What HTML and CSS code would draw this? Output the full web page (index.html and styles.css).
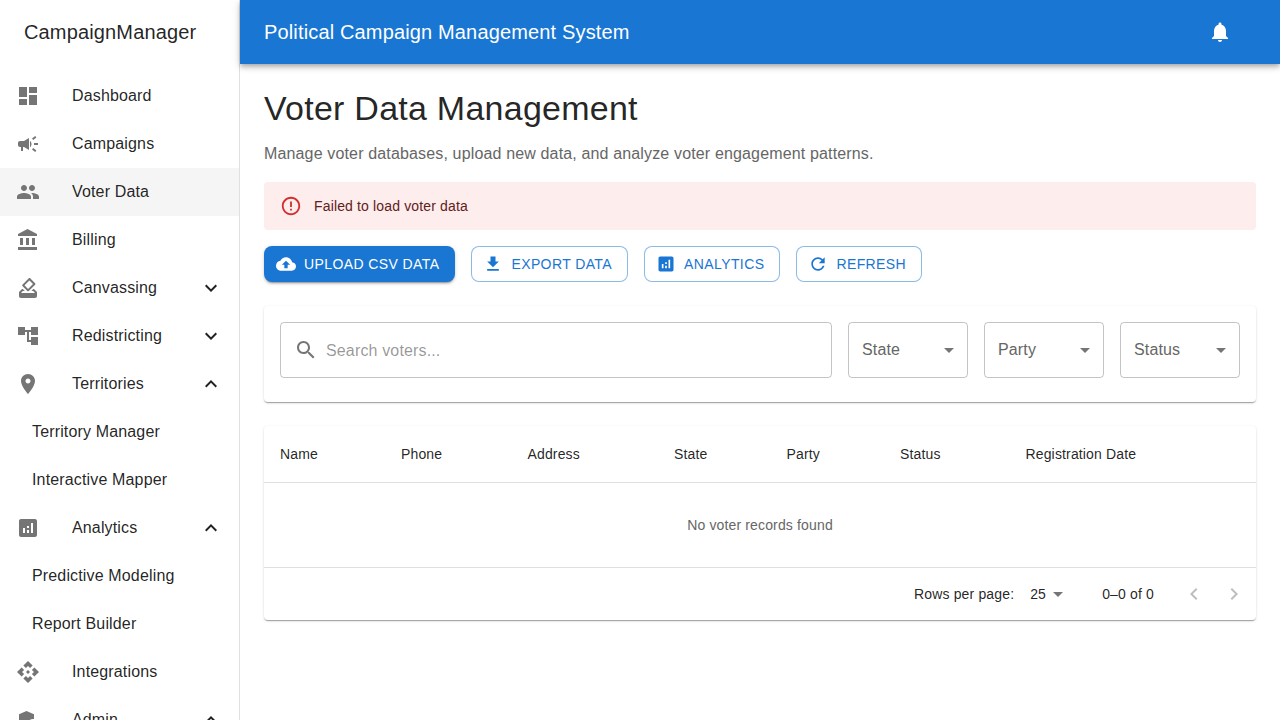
FILE: index.html
```html
<!DOCTYPE html>
<html lang="en">
<head>
<meta charset="utf-8">
<title>Voter Data Management</title>
<link rel="stylesheet" href="styles.css">
</head>
<body>
<svg class="sprite" aria-hidden="true">
  <symbol id="i-dashboard" viewBox="0 0 24 24"><path d="M3 13h8V3H3v10zm0 8h8v-6H3v6zm10 0h8V11h-8v10zm0-18v6h8V3h-8z"/></symbol>
  <symbol id="i-campaign" viewBox="0 0 24 24"><path d="M18 11v2h4v-2h-4zm-2 6.61c.96.71 2.21 1.65 3.2 2.39.4-.53.8-1.07 1.2-1.6-.99-.74-2.24-1.68-3.2-2.4-.4.54-.8 1.08-1.2 1.61zM20.4 5.6c-.4-.53-.8-1.07-1.2-1.6-.99.74-2.24 1.68-3.2 2.4.4.53.8 1.07 1.2 1.6.96-.72 2.21-1.65 3.2-2.4zM4 9c-1.1 0-2 .9-2 2v2c0 1.1.9 2 2 2h1v4h2v-4h1l5 3V6L8 9H4zm11.5 3c0-1.33-.58-2.53-1.5-3.35v6.69c.92-.81 1.5-2.01 1.5-3.34z"/></symbol>
  <symbol id="i-people" viewBox="0 0 24 24"><path d="M16 11c1.66 0 2.99-1.34 2.99-3S17.66 5 16 5c-1.66 0-3 1.34-3 3s1.34 3 3 3zm-8 0c1.66 0 2.99-1.34 2.99-3S9.66 5 8 5C6.34 5 5 6.34 5 8s1.34 3 3 3zm0 2c-2.33 0-7 1.17-7 3.5V19h14v-2.5c0-2.33-4.67-3.5-7-3.5zm8 0c-.29 0-.62.02-.97.05 1.16.84 1.97 1.97 1.97 3.45V19h6v-2.5c0-2.33-4.67-3.5-7-3.5z"/></symbol>
  <symbol id="i-bank" viewBox="0 0 24 24"><path d="M4 10v7h3v-7H4zm6 0v7h3v-7h-3zM2 22h19v-3H2v3zm14-12v7h3v-7h-3zm-4.5-9L2 6v2h19V6l-9.5-5z"/></symbol>
  <symbol id="i-vote" viewBox="0 0 24 24"><path d="M18 13h-.68l-2 2h1.91L19 17H5l1.78-2h2.05l-2-2H6l-3 3v4c0 1.1.89 2 1.99 2H19c1.1 0 2-.89 2-2v-4l-3-3zm-1-5.05l-4.95 4.95-3.54-3.54 4.95-4.95L17 7.95zm-4.24-5.66L6.39 8.66c-.39.39-.39 1.02 0 1.41l4.95 4.95c.39.39 1.02.39 1.41 0l6.36-6.36c.39-.39.39-1.02 0-1.41L14.16 2.3c-.38-.4-1.01-.4-1.4-.01z"/></symbol>
  <symbol id="i-tree" viewBox="0 0 24 24"><path d="M22 11V3h-7v3H9V3H2v8h7V8h2v10h4v3h7v-8h-7v3h-2V8h2v3z"/></symbol>
  <symbol id="i-place" viewBox="0 0 24 24"><path d="M12 2C8.13 2 5 5.13 5 9c0 5.25 7 13 7 13s7-7.75 7-13c0-3.87-3.13-7-7-7zm0 9.5c-1.38 0-2.5-1.12-2.5-2.5s1.12-2.5 2.5-2.5 2.5 1.12 2.5 2.5-1.12 2.5-2.5 2.5z"/></symbol>
  <symbol id="i-analytics" viewBox="0 0 24 24"><path d="M19 3H5c-1.1 0-2 .9-2 2v14c0 1.1.9 2 2 2h14c1.1 0 2-.9 2-2V5c0-1.1-.9-2-2-2zM9 17H7v-5h2v5zm4 0h-2v-3h2v3zm0-5h-2v-2h2v2zm4 5h-2V7h2v10z"/></symbol>
  <symbol id="i-api" viewBox="0 0 24 24"><path d="M14 12l-2 2-2-2 2-2 2 2zm-2-6l2.12 2.12 2.5-2.5L12 1 7.38 5.62l2.5 2.5L12 6zm-6 6l2.12-2.12-2.5-2.5L1 12l4.62 4.62 2.5-2.5L6 12zm12 0l-2.12 2.12 2.5 2.5L23 12l-4.62-4.62-2.5 2.5L18 12zm-6 6l-2.12-2.12-2.5 2.5L12 23l4.62-4.62-2.5-2.5L12 18z"/></symbol>
  <symbol id="i-admin" viewBox="0 0 24 24"><path d="M17 11c.34 0 .67.04 1 .09V6.27L10.5 3 3 6.27v4.91c0 4.54 3.2 8.79 7.5 9.82.55-.13 1.08-.32 1.6-.55-.69-.98-1.1-2.17-1.1-3.45 0-3.31 2.69-6 6-6z"/><path d="M17 13c-2.21 0-4 1.79-4 4s1.79 4 4 4 4-1.79 4-4-1.79-4-4-4zm0 1.38c.62 0 1.12.51 1.12 1.12s-.51 1.12-1.12 1.12-1.12-.51-1.12-1.12.5-1.12 1.12-1.12zm0 5.37c-.93 0-1.74-.46-2.24-1.17.05-.72 1.51-1.08 2.24-1.08s2.19.36 2.24 1.08c-.5.71-1.31 1.17-2.24 1.17z"/></symbol>
  <symbol id="i-more" viewBox="0 0 24 24"><path d="M16.59 8.59L12 13.17 7.41 8.59 6 10l6 6 6-6z"/></symbol>
  <symbol id="i-less" viewBox="0 0 24 24"><path d="M12 8l-6 6 1.41 1.41L12 10.83l4.59 4.58L18 14z"/></symbol>
  <symbol id="i-bell" viewBox="0 0 24 24"><path d="M12 22c1.1 0 2-.9 2-2h-4c0 1.1.89 2 2 2zm6-6v-5c0-3.07-1.64-5.64-4.5-6.32V4c0-.83-.67-1.5-1.5-1.5s-1.5.67-1.5 1.5v.68C7.63 5.36 6 7.92 6 11v5l-2 2v1h16v-1l-2-2z"/></symbol>
  <symbol id="i-error" viewBox="0 0 24 24"><path d="M11 15h2v2h-2zm0-8h2v6h-2zm.99-5C6.47 2 2 6.48 2 12s4.47 10 9.99 10C17.52 22 22 17.52 22 12S17.52 2 11.99 2zM12 20c-4.42 0-8-3.58-8-8s3.58-8 8-8 8 3.58 8 8-3.58 8-8 8z"/></symbol>
  <symbol id="i-upload" viewBox="0 0 24 24"><path d="M19.35 10.04C18.67 6.59 15.64 4 12 4 9.11 4 6.6 5.64 5.35 8.04 2.34 8.36 0 10.91 0 14c0 3.31 2.69 6 6 6h13c2.76 0 5-2.24 5-5 0-2.64-2.05-4.78-4.65-4.96zM14 13v4h-4v-4H7l5-5 5 5h-3z"/></symbol>
  <symbol id="i-download" viewBox="0 0 24 24"><path d="M5 20h14v-2H5v2zM19 9h-4V3H9v6H5l7 7 7-7z"/></symbol>
  <symbol id="i-refresh" viewBox="0 0 24 24"><path d="M17.65 6.35C16.2 4.9 14.21 4 12 4c-4.42 0-7.99 3.58-7.99 8s3.57 8 7.99 8c3.73 0 6.84-2.55 7.73-6h-2.08c-.82 2.33-3.04 4-5.65 4-3.31 0-6-2.69-6-6s2.69-6 6-6c1.66 0 3.14.69 4.22 1.78L13 11h7V4l-2.35 2.35z"/></symbol>
  <symbol id="i-search" viewBox="0 0 24 24"><path d="M15.5 14h-.79l-.28-.27C15.41 12.59 16 11.11 16 9.5 16 5.91 13.09 3 9.5 3S3 5.91 3 9.5 5.91 16 9.5 16c1.61 0 3.09-.59 4.23-1.57l.27.28v.79l5 4.99L20.49 19l-4.99-5zm-6 0C7.01 14 5 11.99 5 9.5S7.01 5 9.5 5 14 7.01 14 9.5 11.99 14 9.5 14z"/></symbol>
  <symbol id="i-drop" viewBox="0 0 24 24"><path d="M7 10l5 5 5-5z"/></symbol>
  <symbol id="i-left" viewBox="0 0 24 24"><path d="M15.41 16.59L10.83 12l4.58-4.59L14 6l-6 6 6 6 1.41-1.41z"/></symbol>
  <symbol id="i-right" viewBox="0 0 24 24"><path d="M8.59 16.59L13.17 12 8.59 7.41 10 6l6 6-6 6-1.41-1.41z"/></symbol>
</svg>

<div class="app">
  <aside class="sidebar">
    <div class="brand">CampaignManager</div>
    <nav class="nav">
      <a class="item"><svg class="icon"><use href="#i-dashboard"/></svg><span class="label">Dashboard</span></a>
      <a class="item"><svg class="icon"><use href="#i-campaign"/></svg><span class="label">Campaigns</span></a>
      <a class="item selected"><svg class="icon"><use href="#i-people"/></svg><span class="label">Voter Data</span></a>
      <a class="item"><svg class="icon"><use href="#i-bank"/></svg><span class="label">Billing</span></a>
      <a class="item"><svg class="icon"><use href="#i-vote"/></svg><span class="label">Canvassing</span><svg class="chev"><use href="#i-more"/></svg></a>
      <a class="item"><svg class="icon"><use href="#i-tree"/></svg><span class="label">Redistricting</span><svg class="chev"><use href="#i-more"/></svg></a>
      <a class="item"><svg class="icon"><use href="#i-place"/></svg><span class="label">Territories</span><svg class="chev"><use href="#i-less"/></svg></a>
      <a class="item sub"><span class="label">Territory Manager</span></a>
      <a class="item sub"><span class="label">Interactive Mapper</span></a>
      <a class="item"><svg class="icon"><use href="#i-analytics"/></svg><span class="label">Analytics</span><svg class="chev"><use href="#i-less"/></svg></a>
      <a class="item sub"><span class="label">Predictive Modeling</span></a>
      <a class="item sub"><span class="label">Report Builder</span></a>
      <a class="item"><svg class="icon"><use href="#i-api"/></svg><span class="label">Integrations</span></a>
      <a class="item"><svg class="icon"><use href="#i-admin"/></svg><span class="label">Admin</span><svg class="chev"><use href="#i-less"/></svg></a>
    </nav>
  </aside>

  <div class="main">
    <header class="topbar">
      <div class="topbar-title">Political Campaign Management System</div>
      <svg class="bell"><use href="#i-bell"/></svg>
    </header>

    <main class="content">
      <h1 class="page-title">Voter Data Management</h1>
      <p class="page-sub">Manage voter databases, upload new data, and analyze voter engagement patterns.</p>

      <div class="alert">
        <svg class="alert-icon"><use href="#i-error"/></svg>
        <span>Failed to load voter data</span>
      </div>

      <div class="actions">
        <button class="btn contained"><svg class="btn-icon"><use href="#i-upload"/></svg>UPLOAD CSV DATA</button>
        <button class="btn outlined"><svg class="btn-icon"><use href="#i-download"/></svg>EXPORT DATA</button>
        <button class="btn outlined"><svg class="btn-icon"><use href="#i-analytics"/></svg>ANALYTICS</button>
        <button class="btn outlined"><svg class="btn-icon"><use href="#i-refresh"/></svg>REFRESH</button>
      </div>

      <section class="card filters">
        <label class="search">
          <svg class="search-icon"><use href="#i-search"/></svg>
          <input class="search-input" type="text" placeholder="Search voters...">
        </label>
        <div class="select"><span>State</span><svg class="drop"><use href="#i-drop"/></svg></div>
        <div class="select"><span>Party</span><svg class="drop"><use href="#i-drop"/></svg></div>
        <div class="select"><span>Status</span><svg class="drop"><use href="#i-drop"/></svg></div>
      </section>

      <section class="card table-card">
        <table class="table">
          <colgroup>
            <col class="c-name"><col class="c-phone"><col class="c-address"><col class="c-state"><col class="c-party"><col class="c-status"><col>
          </colgroup>
          <thead>
            <tr><th>Name</th><th>Phone</th><th>Address</th><th>State</th><th>Party</th><th>Status</th><th>Registration Date</th></tr>
          </thead>
          <tbody>
            <tr><td class="empty" colspan="7">No voter records found</td></tr>
          </tbody>
        </table>
        <div class="pager">
          <span>Rows per page:</span>
          <div class="pager-select"><span>25</span><svg class="drop"><use href="#i-drop"/></svg></div>
          <span>0–0 of 0</span>
          <div class="pager-actions">
            <span class="pager-btn"><svg class="pager-icon"><use href="#i-left"/></svg></span>
            <span class="pager-btn"><svg class="pager-icon"><use href="#i-right"/></svg></span>
          </div>
        </div>
      </section>
    </main>
  </div>
</div>
</body>
</html>
```
FILE: styles.css
```css
* { box-sizing: border-box; }
html, body { margin: 0; height: 720px; overflow: hidden; background: #fff; }
body { font-family: "Liberation Sans", Arial, sans-serif; color: rgba(0,0,0,.87); letter-spacing: .15px; }
.sprite { display: none; }

.app { display: flex; height: 720px; }

.sidebar { flex: 0 0 240px; width: 240px; height: 720px; overflow: hidden; border-right: 1px solid #e0e0e0; background: #fff; }
.brand { height: 64px; padding-left: 24px; display: flex; align-items: center; font-size: 20px; }
.nav { padding-top: 8px; display: flex; flex-direction: column; }
.item { flex: 0 0 48px; height: 48px; padding: 0 16px; display: flex; align-items: center; font-size: 16px; }
.item.selected { background: rgba(0,0,0,.04); }
.icon { width: 24px; height: 24px; margin-right: 32px; fill: #757575; flex: none; }
.label { flex: 1; }
.item.sub { padding-left: 32px; }
.chev { width: 24px; height: 24px; fill: rgba(0,0,0,.87); flex: none; }

.main { flex: 1; min-width: 0; display: flex; flex-direction: column; }
.topbar { position: relative; flex: 0 0 64px; height: 64px; padding: 0 48px 0 24px; display: flex; align-items: center; justify-content: space-between; background: #1976d2; color: #fff; box-shadow: 0 2px 4px -1px rgba(0,0,0,.2), 0 4px 5px 0 rgba(0,0,0,.14), 0 1px 10px 0 rgba(0,0,0,.12); }
.topbar-title { font-size: 20px; }
.bell { width: 24px; height: 24px; fill: #fff; }

.content { flex: 1; padding: 24px; display: flex; flex-direction: column; }
.page-title { margin: 0 0 13px; font-size: 34px; font-weight: 400; line-height: 41px; letter-spacing: .25px; color: rgba(0,0,0,.87); }
.page-sub { margin: 0 0 16px; font-size: 16px; line-height: 24px; color: #666; }

.alert { height: 48px; flex: none; padding: 0 16px; display: flex; align-items: center; gap: 12px; border-radius: 4px; background: #fdeded; color: #5f2120; font-size: 14px; }
.alert-icon { width: 22px; height: 22px; fill: #d32f2f; flex: none; }

.actions { margin-top: 16px; display: flex; gap: 16px; }
.btn { height: 36px; padding: 0 15px 0 11px; display: flex; align-items: center; border-radius: 8px; font: 400 14px/1 "Liberation Sans", Arial, sans-serif; letter-spacing: .4px; }
.btn-icon { width: 20px; height: 20px; margin-right: 8px; fill: currentColor; flex: none; }
.contained { padding: 0 16px 0 12px; border: 0; background: #1976d2; color: #fff; box-shadow: 0 3px 1px -2px rgba(0,0,0,.2), 0 2px 2px 0 rgba(0,0,0,.14), 0 1px 5px 0 rgba(0,0,0,.12); }
.outlined { border: 1px solid rgba(25,118,210,.5); background: #fff; color: #1976d2; }

.card { background: #fff; border-radius: 4px; box-shadow: 0 2px 1px -1px rgba(0,0,0,.2), 0 1px 1px 0 rgba(0,0,0,.14), 0 1px 3px 0 rgba(0,0,0,.12); }
.filters { margin-top: 24px; padding: 16px 16px 24px; display: flex; gap: 16px; flex: none; }
.search { flex: 1; height: 56px; padding-left: 13px; display: flex; align-items: center; gap: 8px; border: 1px solid rgba(0,0,0,.23); border-radius: 4px; }
.search-icon { width: 24px; height: 24px; fill: #757575; flex: none; }
.search-input { flex: 1; min-width: 0; border: 0; outline: 0; padding: 2px 0 0; background: transparent; font: 16px "Liberation Sans", Arial, sans-serif; letter-spacing: .15px; color: rgba(0,0,0,.87); }
.search-input::placeholder { color: rgba(0,0,0,.42); opacity: 1; }
.select { flex: 0 0 120px; height: 56px; padding: 0 6px 0 13px; display: flex; align-items: center; justify-content: space-between; border: 1px solid rgba(0,0,0,.23); border-radius: 4px; font-size: 16px; color: #666; }
.drop { width: 24px; height: 24px; fill: #757575; flex: none; }

.table-card { margin-top: 24px; flex: none; }
.table { width: 100%; border-collapse: separate; border-spacing: 0; table-layout: fixed; font-size: 14px; }
.c-name { width: 121px; }
.c-phone { width: 126.5px; }
.c-address { width: 146.5px; }
.c-state { width: 112.6px; }
.c-party { width: 113.4px; }
.c-status { width: 125.5px; }
.table th { height: 57px; padding: 0 16px; text-align: left; font-weight: 400; border-bottom: 1px solid #e0e0e0; }
.empty { height: 85px; text-align: center; color: #666; border-bottom: 1px solid #e0e0e0; }

.pager { height: 52px; padding-right: 2px; display: flex; align-items: center; justify-content: flex-end; font-size: 14px; }
.pager-select { width: 48px; margin: 0 32px 0 8px; padding-left: 8px; display: flex; align-items: center; justify-content: space-between; }
.pager-actions { margin-left: 20px; display: flex; }
.pager-btn { width: 40px; height: 40px; display: flex; align-items: center; justify-content: center; }
.pager-icon { width: 24px; height: 24px; fill: rgba(0,0,0,.26); }
```
